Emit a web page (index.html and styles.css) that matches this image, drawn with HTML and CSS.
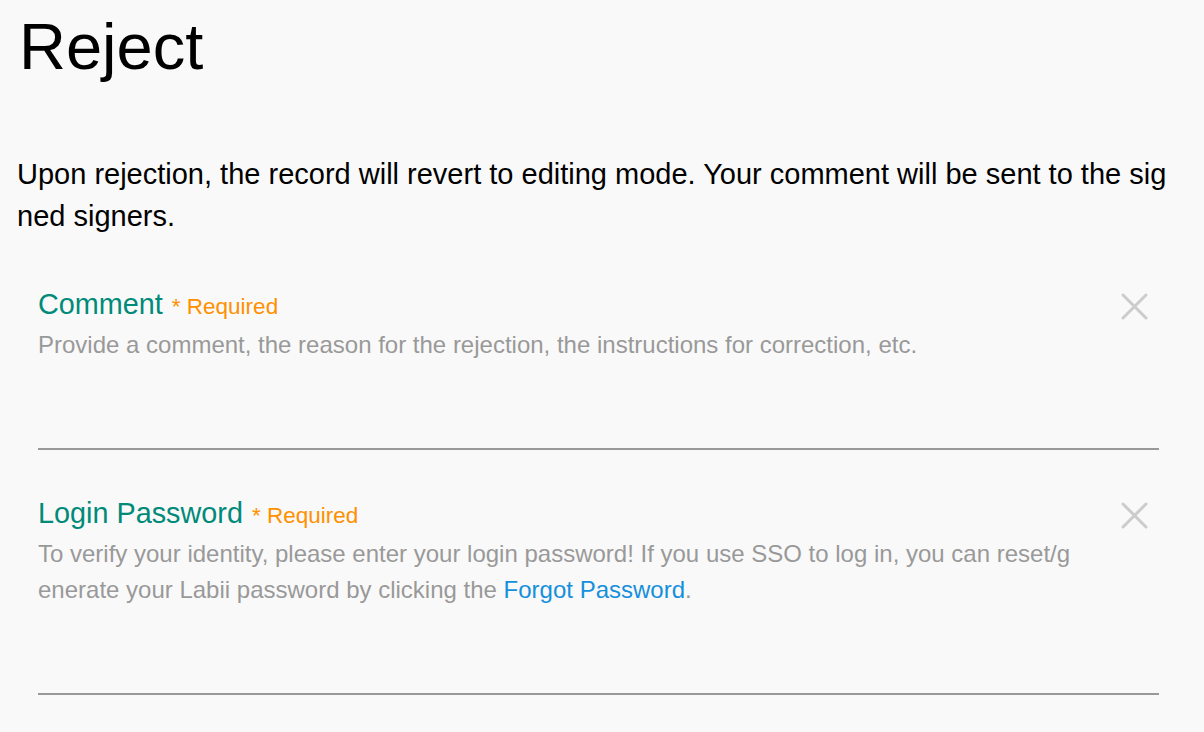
FILE: index.html
```html
<!DOCTYPE html>
<html lang="en">
<head>
    <meta charset="UTF-8">
    <meta name="viewport" content="width=device-width, initial-scale=1.0">
    <title>Reject</title>
    <link rel="stylesheet" href="styles.css">
</head>
<body>
    <div class="page">
        <h1>Reject</h1>
        <p class="intro">Upon rejection, the record will revert to editing mode. Your comment will be sent to the signed signers.</p>

        <div class="form">
            <div class="field">
                <div class="field-head">
                    <div class="field-text">
                        <label class="field-label">Comment <span class="required">* Required</span></label>
                        <div class="field-hint">Provide a comment, the reason for the rejection, the instructions for correction, etc.</div>
                    </div>
                    <span class="clear-icon">
                        <svg width="27" height="27" viewBox="0 0 27 27"><path d="M2 2 L25 25 M25 2 L2 25" stroke="#cccccc" stroke-width="3" stroke-linecap="round" fill="none"/></svg>
                    </span>
                </div>
                <div class="field-input"></div>
            </div>

            <div class="field">
                <div class="field-head">
                    <div class="field-text">
                        <label class="field-label">Login Password <span class="required">* Required</span></label>
                        <div class="field-hint">To verify your identity, please enter your login password! If you use SSO to log in, you can reset/generate your Labii password by clicking the <a href="#" class="link">Forgot Password</a>.</div>
                    </div>
                    <span class="clear-icon">
                        <svg width="27" height="27" viewBox="0 0 27 27"><path d="M2 2 L25 25 M25 2 L2 25" stroke="#cccccc" stroke-width="3" stroke-linecap="round" fill="none"/></svg>
                    </span>
                </div>
                <div class="field-input"></div>
            </div>
        </div>
    </div>
</body>
</html>
```

FILE: styles.css
```css
body {
    margin: 0;
    background-color: #f9f9f9;
    font-family: "Liberation Sans", Arial, sans-serif;
    color: #000;
}
.page {
    padding: 0 30px 0 17px;
}
h1 {
    margin: 0 0 0 2px;
    padding-top: 10px;
    font-size: 65px;
    line-height: 74px;
    font-weight: normal;
}
.intro {
    margin: 69px 0 0;
    font-size: 29px;
    line-height: 42px;
    word-break: break-all;
}
.form {
    margin: 49px 15px 0 21px;
}
.field {
    margin-bottom: 45px;
}
.field-head {
    display: flex;
    align-items: flex-start;
    gap: 43px;
}
.field-text {
    flex: 1;
}
.field-label {
    display: block;
    font-size: 28.8px;
    line-height: 36px;
    color: #008a79;
}
.required {
    margin-left: 1px;
    font-size: 22.5px;
    color: #ff9000;
}
.field-hint {
    margin-top: 2px;
    font-size: 24px;
    line-height: 36px;
    color: #999;
    word-break: break-all;
}
.link {
    color: #1590dc;
    text-decoration: none;
}
.clear-icon {
    display: block;
    width: 27px;
    height: 27px;
    margin: 7px 11px 0 0;
}
.clear-icon svg {
    display: block;
}
.field-input {
    height: 85px;
    border-bottom: 2px solid #999;
}
```
